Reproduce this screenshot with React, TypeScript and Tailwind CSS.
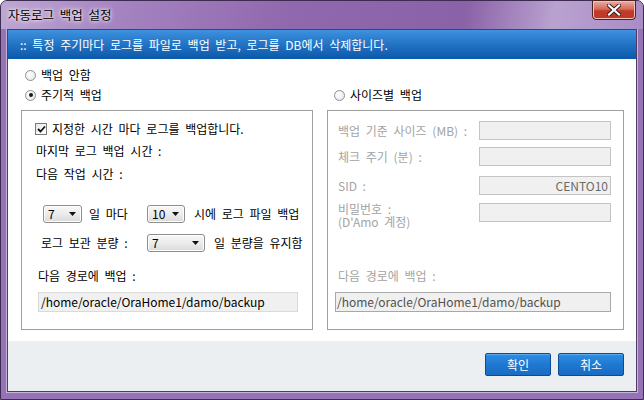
import React from "react";

function Radio({ checked = false }: { checked?: boolean }) {
  return (
    <span className="relative inline-flex h-[11px] w-[11px] shrink-0 items-center justify-center rounded-full border border-[#8f8f8f] bg-[radial-gradient(circle_at_35%_35%,#ffffff,#e4e4e4)]">
      {checked && <span className="h-[4px] w-[4px] rounded-full bg-[#1a1a1a]" />}
    </span>
  );
}

function Checkbox() {
  return (
    <span className="inline-flex h-[12px] w-[12px] shrink-0 items-center justify-center border border-[#7a7a7a] bg-gradient-to-br from-[#e8e8e8] to-[#ffffff]">
      <svg width="9" height="8" viewBox="0 0 9 8">
        <path d="M1 4 L3.5 6.5 L8 1.5" stroke="#111" strokeWidth="1.8" fill="none" />
      </svg>
    </span>
  );
}

function Combo({ value, w }: { value: string; w: string }) {
  return (
    <div
      className={`flex h-[18px] ${w} shrink-0 items-center justify-between rounded-[3px] border border-[#8d8d8d] bg-gradient-to-b from-[#f7f7f7] via-[#ececec] to-[#d9d9d9] pl-[4px] pr-[5px] shadow-[inset_0_0_0_1px_#ffffff]`}
    >
      <span className="leading-[16px] text-black">{value}</span>
      <svg width="7" height="4" viewBox="0 0 7 4">
        <path d="M0 0 H7 L3.5 4 Z" fill="#111" />
      </svg>
    </div>
  );
}

function Btn({ label }: { label: string }) {
  return (
    <div className="flex h-[23px] w-[66px] items-center justify-center rounded-[2px] border border-[#0c4c92] bg-gradient-to-b from-[#2f8ee6] via-[#1e78d2] to-[#1a6cc0] text-white shadow-[inset_0_1px_0_#5aaaf0]">
      {label}
    </div>
  );
}

export default function App() {
  return (
    <div className="h-[400px] w-[644px] overflow-hidden bg-white font-['Noto_Sans_CJK_KR','Liberation_Sans',sans-serif] text-[12px] text-black [word-spacing:3px]">
      <div className="flex h-[400px] w-[644px] flex-col rounded-t-[7px] border border-[#3d2c52] bg-[#9573b5]">
        {/* title bar */}
        <div className="relative h-[28px] shrink-0 rounded-t-[6px] bg-[linear-gradient(100deg,#bea7d3_0%,#a584c1_18%,#9068ad_45%,#8a62a7_72%,#b9a2d0_86%,#a98cc6_100%)]">
          <div className="absolute left-[7px] top-[5px] text-[12.5px] leading-[18px] text-black [text-shadow:0_0_6px_#ffffff,0_0_3px_#ffffff]">
            자동로그 백업 설정
          </div>
          <div className="absolute right-[7px] top-[-1px] flex h-[20px] w-[44px] items-center justify-center rounded-b-[4px] border border-[#4c2424] bg-[linear-gradient(to_bottom,#e9aea3_0%,#d56a58_45%,#c43a27_55%,#b9392a_100%)] shadow-[inset_0_0_0_1px_#f2c2b8]">
            <svg width="14" height="12" viewBox="0 0 14 12">
              <path d="M2 1.5 L12 10.5 M12 1.5 L2 10.5" stroke="#3a1a1a" strokeWidth="4" strokeLinecap="square" />
              <path d="M2 1.5 L12 10.5 M12 1.5 L2 10.5" stroke="#ffffff" strokeWidth="2.2" strokeLinecap="square" />
            </svg>
          </div>
        </div>

        {/* client */}
        <div className="mx-[6px] mb-[7px] flex flex-1 flex-col border border-[#4e3d62] bg-white shadow-[0_0_0_1px_#c6b4d9]">
          <div className="flex h-[29px] shrink-0 items-center bg-gradient-to-b from-[#3e92de] via-[#2273c4] to-[#0a58aa] pl-[12px] text-white">
            :: 특정 주기마다 로그를 파일로 백업 받고, 로그를 DB에서 삭제합니다.
          </div>

          <div className="flex h-[282px] shrink-0 flex-col">
            <div className="mt-[6px] flex h-[20px] items-center pl-[17px]">
              <Radio />
              <span className="ml-[5px]">백업 안함</span>
            </div>

            <div className="flex pl-[13px]">
              {/* left column */}
              <div className="flex w-[292px] flex-col">
                <div className="flex h-[20px] items-center pl-[4px]">
                  <Radio checked />
                  <span className="ml-[5px]">주기적 백업</span>
                </div>
                <div className="mt-[5px] flex h-[220px] flex-col border border-[#a0a0a0]">
                  <div className="mt-[9px] flex h-[18px] items-center pl-[13px]">
                    <Checkbox />
                    <span className="ml-[5px]">지정한 시간 마다 로그를 백업합니다.</span>
                  </div>
                  <div className="mt-[4px] flex h-[18px] items-center pl-[14px]">마지막 로그 백업 시간 :</div>
                  <div className="mt-[5px] flex h-[18px] items-center pl-[14px]">다음 작업 시간 :</div>
                  <div className="mt-[22px] flex h-[18px] items-center pl-[21px]">
                    <Combo value="7" w="w-[39px]" />
                    <span className="ml-[7px] w-[58px]">일 마다</span>
                    <Combo value="10" w="w-[38px]" />
                    <span className="ml-[9px]">시에 로그 파일 백업</span>
                  </div>
                  <div className="mt-[11px] flex h-[18px] items-center pl-[19px]">
                    <span className="w-[106px]">로그 보관 분량 :</span>
                    <Combo value="7" w="w-[58px]" />
                    <span className="ml-[9px]">일 분량을 유지함</span>
                  </div>
                  <div className="mt-[15px] flex h-[18px] items-center pl-[16px]">다음 경로에 백업 :</div>
                  <div className="ml-[16px] mt-[7px] flex h-[20px] w-[260px] items-center border border-[#dadada] bg-[#f0f0f0] pl-[2px]">
                    /home/oracle/OraHome1/damo/backup
                  </div>
                </div>
              </div>

              {/* right column */}
              <div className="ml-[14px] flex w-[297px] flex-col">
                <div className="flex h-[20px] items-center pl-[7px]">
                  <Radio />
                  <span className="ml-[5px]">사이즈별 백업</span>
                </div>
                <div className="mt-[5px] flex h-[220px] flex-col border border-[#a0a0a0] text-[#a3a3a3]">
                  <div className="mt-[10px] flex h-[19px] items-center pl-[10px]">
                    <span className="w-[141px] whitespace-nowrap">백업 기준 사이즈 (MB) :</span>
                    <div className="h-[19px] w-[132px] border border-[#c4c4c4] bg-[#f0f0f0]" />
                  </div>
                  <div className="mt-[7px] flex h-[19px] items-center pl-[10px]">
                    <span className="w-[141px]">체크 주기 (분) :</span>
                    <div className="h-[19px] w-[132px] border border-[#c4c4c4] bg-[#f0f0f0]" />
                  </div>
                  <div className="mt-[10px] flex h-[19px] items-center pl-[10px]">
                    <span className="w-[141px]">SID :</span>
                    <div className="flex h-[19px] w-[132px] items-center justify-end border border-[#c4c4c4] bg-[#f0f0f0] pr-[2px] text-[#6a6a6a]">
                      CENTO10
                    </div>
                  </div>
                  <div className="mt-[8px] flex h-[19px] items-start pl-[10px]">
                    <span className="-mt-[1px] w-[141px] leading-[13px]">
                      비밀번호 :<br />(D'Amo 계정)
                    </span>
                    <div className="h-[19px] w-[132px] border border-[#c4c4c4] bg-[#f0f0f0]" />
                  </div>
                  <div className="mt-[45px] flex h-[18px] items-center pl-[10px]">다음 경로에 백업 :</div>
                  <div className="ml-[7px] mt-[7px] flex h-[20px] w-[276px] items-center border border-[#a8a8a8] bg-[#f0f0f0] pl-[1px] text-[#505050]">
                    /home/oracle/OraHome1/damo/backup
                  </div>
                </div>
              </div>
            </div>
          </div>

          <div className="flex flex-1 items-start justify-end gap-[7px] bg-[#eceff2] pr-[12px] pt-[12px]">
            <Btn label="확인" />
            <Btn label="취소" />
          </div>
        </div>
      </div>
    </div>
  );
}
